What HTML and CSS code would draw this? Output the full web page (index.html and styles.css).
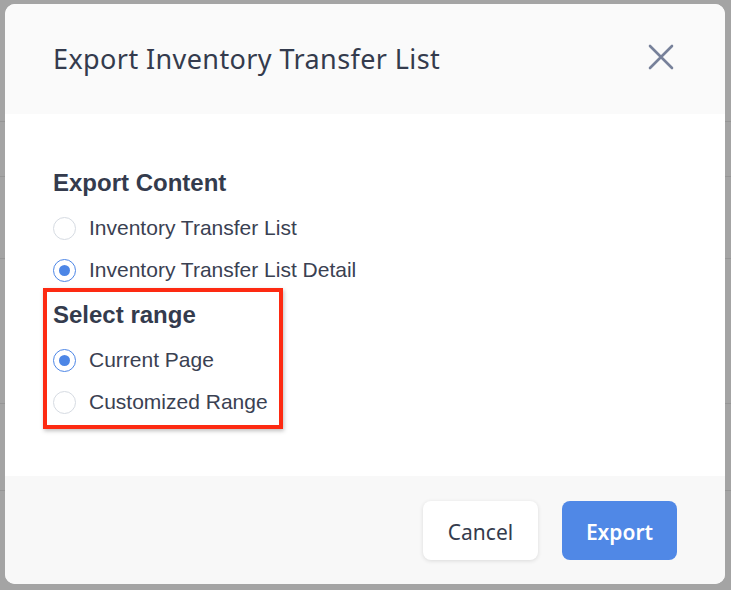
FILE: index.html
```html
<!DOCTYPE html>
<html lang="en">
<head>
<meta charset="utf-8">
<title>Export Inventory Transfer List</title>
<link rel="stylesheet" href="styles.css">
</head>
<body>
<div class="backdrop">
  <div class="bg-lines">
    <div class="bg-line l1"></div>
    <div class="bg-line l2"></div>
    <div class="bg-line l3"></div>
    <div class="bg-line l4"></div>
    <div class="bg-line l5"></div>
  </div>
  <div class="modal">
    <div class="modal-header">
      <h1 class="modal-title">Export Inventory Transfer List</h1>
      <button class="close-btn" aria-label="Close">
        <svg width="26" height="26" viewBox="0 0 26 26" fill="none" stroke="#77819a" stroke-width="2.6" stroke-linecap="round">
          <path d="M2 2 L24 24 M24 2 L2 24"/>
        </svg>
      </button>
    </div>
    <div class="modal-body">
      <div class="group">
        <div class="group-title">Export Content</div>
        <label class="radio-row"><span class="radio"></span><span class="radio-label">Inventory Transfer List</span></label>
        <label class="radio-row"><span class="radio checked"></span><span class="radio-label">Inventory Transfer List Detail</span></label>
      </div>
      <div class="group highlighted">
        <div class="group-title">Select range</div>
        <label class="radio-row"><span class="radio checked"></span><span class="radio-label">Current Page</span></label>
        <label class="radio-row"><span class="radio"></span><span class="radio-label">Customized Range</span></label>
      </div>
    </div>
    <div class="modal-footer">
      <button class="btn btn-cancel">Cancel</button>
      <button class="btn btn-primary">Export</button>
    </div>
  </div>
</div>
</body>
</html>
```

FILE: styles.css
```css
* { box-sizing: border-box; }
html, body { margin: 0; padding: 0; }
body {
  width: 731px;
  height: 590px;
  overflow: hidden;
  background: #a4a4a4;
  font-family: "Liberation Sans", Arial, sans-serif;
}
.backdrop {
  position: relative;
  width: 731px;
  height: 590px;
  padding: 4px 6px 6px 5px;
  background: #a4a4a4;
}
.bg-lines { position: absolute; inset: 0; }
.bg-line {
  position: absolute;
  left: 0;
  right: 0;
  height: 1px;
  background: #969696;
}
.l1 { top: 121px; }
.l2 { top: 176px; }
.l3 { top: 258px; }
.l4 { top: 403px; }
.l5 { top: 490px; }

.modal {
  position: relative;
  width: 720px;
  height: 580px;
  border-radius: 10px;
  overflow: hidden;
  background: #ffffff;
  display: flex;
  flex-direction: column;
}
.modal-header {
  height: 110px;
  flex: none;
  background: #fafafa;
  display: flex;
  align-items: center;
  justify-content: space-between;
  padding: 0 51px 0 48px;
}
.modal-title {
  margin: 0;
  font-family: "Noto Sans", "Open Sans", sans-serif;
  font-weight: 400;
  font-size: 27px;
  letter-spacing: 0.4px;
  color: #343b4d;
  line-height: 36px;
  padding-bottom: 1px;
}
.close-btn {
  border: 0;
  background: transparent;
  padding: 0;
  width: 26px;
  height: 26px;
  display: flex;
  margin-top: -5px;
}
.modal-body {
  flex: 1;
  padding: 51px 48px 0 48px;
  background: #ffffff;
}
.group { margin-bottom: 6px; }
.group-title {
  font-weight: 700;
  font-size: 24px;
  line-height: 36px;
  color: #343b4d;
  margin-bottom: 6px;
}
.radio-row {
  display: flex;
  align-items: center;
  height: 42px;
  gap: 13px;
}
.radio {
  width: 23px;
  height: 23px;
  border-radius: 50%;
  border: 1px solid #d6dbe2;
  background: #fff;
  display: flex;
  align-items: center;
  justify-content: center;
  flex: none;
}
.radio.checked { border-color: #4d86e6; }
.radio.checked::after {
  content: "";
  width: 11px;
  height: 11px;
  border-radius: 50%;
  background: #4d86e6;
}
.radio-label {
  font-size: 21px;
  color: #3a4152;
}
.highlighted {
  position: relative;
  width: fit-content;
}
.highlighted::after {
  content: "";
  position: absolute;
  top: -9px;
  bottom: -6px;
  left: -10px;
  right: -15px;
  border: 4px solid #fd2a12;
  box-shadow: 1px 2px 4px rgba(0,0,0,0.25);
  pointer-events: none;
}
.modal-footer {
  height: 108px;
  flex: none;
  background: #f8f8f8;
  display: flex;
  align-items: center;
  justify-content: flex-end;
  gap: 24px;
  padding: 0 48px 0 0;
}
.btn {
  width: 115px;
  height: 59px;
  border-radius: 8px;
  font-family: "Noto Sans", "Open Sans", sans-serif;
  font-size: 21px;
  border: 0;
  padding: 3px 0 0 0;
}
.btn-cancel {
  background: #ffffff;
  color: #343b4d;
  box-shadow: 0 1px 4px rgba(0,0,0,0.12);
}
.btn-primary {
  background: #5088e6;
  color: #ffffff;
  font-weight: 600;
}
```
